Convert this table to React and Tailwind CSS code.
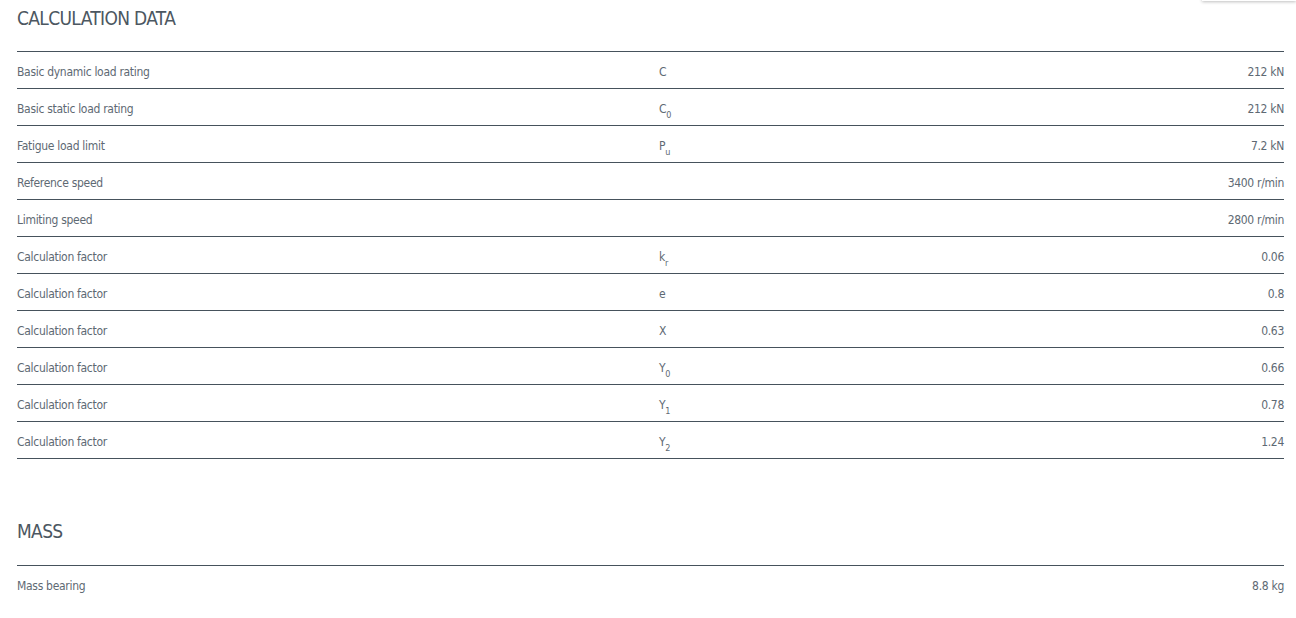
const calcRows = [
  { label: 'Basic dynamic load rating', sym: 'C', sub: null, value: '212 kN' },
  { label: 'Basic static load rating', sym: 'C', sub: '0', value: '212 kN' },
  { label: 'Fatigue load limit', sym: 'P', sub: 'u', value: '7.2 kN' },
  { label: 'Reference speed', sym: '', sub: null, value: '3400 r/min' },
  { label: 'Limiting speed', sym: '', sub: null, value: '2800 r/min' },
  { label: 'Calculation factor', sym: 'k', sub: 'r', value: '0.06' },
  { label: 'Calculation factor', sym: 'e', sub: null, value: '0.8' },
  { label: 'Calculation factor', sym: 'X', sub: null, value: '0.63' },
  { label: 'Calculation factor', sym: 'Y', sub: '0', value: '0.66' },
  { label: 'Calculation factor', sym: 'Y', sub: '1', value: '0.78' },
  { label: 'Calculation factor', sym: 'Y', sub: '2', value: '1.24' },
]

function Row({ label, sym, sub, value }) {
  return (
    <div className="flex h-[37px] items-center border-t border-[#46525c] pt-[3px] text-[12px] tracking-[-0.3px] text-[#5e6973]">
      <span className="w-[642px] shrink-0">{label}</span>
      <span className="flex-1">
        {sym}
        {sub && <sub className="text-[9px] align-[-3px]">{sub}</sub>}
      </span>
      <span className="text-right">{value}</span>
    </div>
  )
}

export default function App() {
  return (
    <div
      className="relative min-h-[618px] bg-white pl-[17px] pr-[12px]"
      style={{ fontFamily: '"DejaVu Sans Condensed", "Liberation Sans", sans-serif' }}
    >
      {/* bottom edge of a menu above */}
      <div className="absolute right-0 top-[-20px] h-[21px] w-[94px] bg-white shadow-[0_1px_3px_rgba(0,0,0,0.25)]" />

      <section className="pt-[5px]">
        <h2 className="h-[46px] text-[19px] font-light leading-[26px] tracking-[-0.65px] text-[#4c5761]">CALCULATION DATA</h2>
        <div className="border-b border-[#46525c]">
          {calcRows.map((r, i) => <Row key={i} {...r} />)}
        </div>
      </section>

      <section className="pt-[59px]">
        <h2 className="h-[47px] text-[19px] font-light leading-[26px] tracking-[-0.65px] text-[#4c5761]">MASS</h2>
        <Row label="Mass bearing" sym="" sub={null} value="8.8 kg" />
      </section>
    </div>
  )
}
